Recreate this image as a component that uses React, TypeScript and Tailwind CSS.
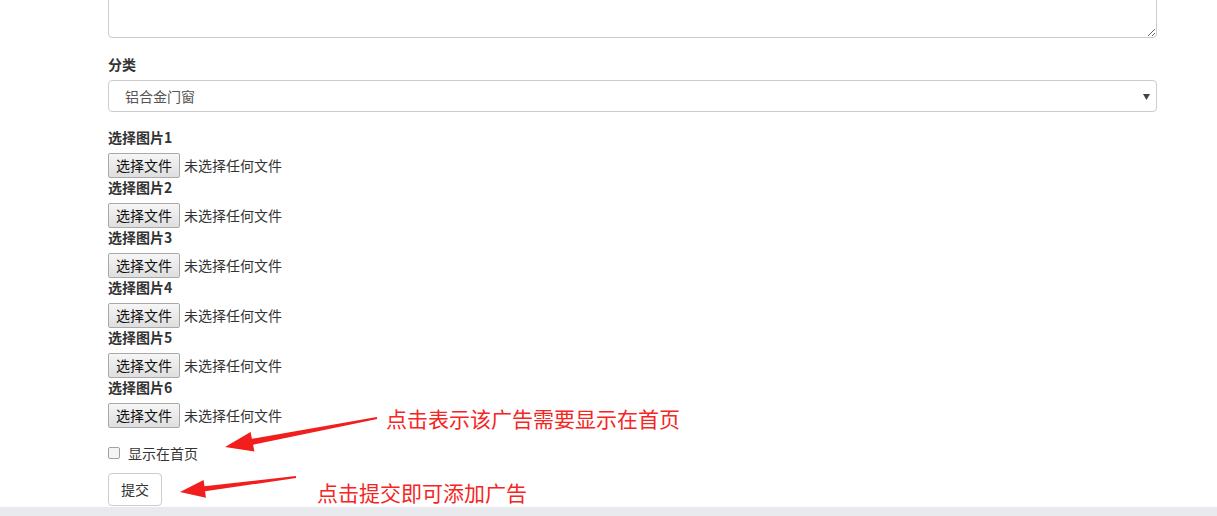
const FONT = { fontFamily: '"Noto Sans CJK SC", "Liberation Sans", sans-serif' };

function FileField({ index }: { index: number }) {
  return (
    <div className="flex flex-col">
      <label className="block h-[18px] text-[14px] font-bold leading-[18px] text-[#333]">
        选择图片{index}
      </label>
      <div className="mt-[7px] flex h-[25px] items-center">
        <button
          type="button"
          className="h-[25px] w-[72px] rounded-[2px] border border-[#a9a9a9] bg-gradient-to-b from-[#f6f6f6] to-[#dedede] text-[14px] leading-[23px] text-[#111]"
        >
          选择文件
        </button>
        <span className="ml-[4px] text-[14px] text-[#333]">未选择任何文件</span>
      </div>
    </div>
  );
}

function Annotations() {
  return (
    <div className="pointer-events-none absolute inset-0">
      <svg className="absolute left-0 top-0" width="1217" height="516">
        <polygon
          fill="#f21d1d"
          points="225,447 254.4,451.6 253.1,444.7 377.2,419 376.8,417 251.9,438.8 250.6,431.9"
        />
        <polygon
          fill="#f21d1d"
          points="180,492 205.9,497.7 205.1,491.3 296.1,478 295.9,476 204.5,486.3 203.6,479.9"
        />
      </svg>
      <span className="absolute left-[386px] top-[404px] text-[21px] leading-[28px] text-[#f5251f]">
        点击表示该广告需要显示在首页
      </span>
      <span className="absolute left-[317px] top-[478px] text-[21px] leading-[28px] text-[#f5251f]">
        点击提交即可添加广告
      </span>
    </div>
  );
}

export default function App() {
  return (
    <div className="relative h-[516px] w-[1217px] overflow-hidden bg-white" style={FONT}>
      <div className="flex w-[1157px] flex-col pl-[108px]">
        <textarea className="-mt-[30px] h-[68px] w-full resize-y rounded-[4px] border border-[#ccc] bg-white" />

        <label className="mt-[16px] block h-[20px] text-[14px] font-bold leading-[20px] text-[#333]">分类</label>
        <div className="relative mt-[6px] h-[32px] w-full rounded-[4px] border border-[#ccc] bg-white">
          <div className="flex h-full items-center pl-[16px] text-[14px] text-[#555]">铝合金门窗</div>
          <svg className="absolute right-[6px] top-[13px]" width="7" height="6" viewBox="0 0 7 6">
            <polygon points="0,0 7,0 3.5,6" fill="#444" />
          </svg>
        </div>

        <div className="mt-[16px] flex flex-col">
          {[1, 2, 3, 4, 5, 6].map((i) => (
            <FileField key={i} index={i} />
          ))}
        </div>

        <div className="mt-[15px] flex h-[20px] items-center">
          <span className="h-[12px] w-[12px] rounded-[2px] border border-[#a0a0a0] bg-[#f4f4f4]" />
          <span className="ml-[8px] text-[14px] text-[#333]">显示在首页</span>
        </div>

        <button
          type="button"
          className="mt-[10px] h-[33px] w-[54px] rounded-[4px] border border-[#ccc] bg-white text-[14px] text-[#333]"
        >
          提交
        </button>
      </div>
      <div className="absolute bottom-0 left-0 h-[9px] w-full bg-[#e9eaee]" />
      <Annotations />
    </div>
  );
}
